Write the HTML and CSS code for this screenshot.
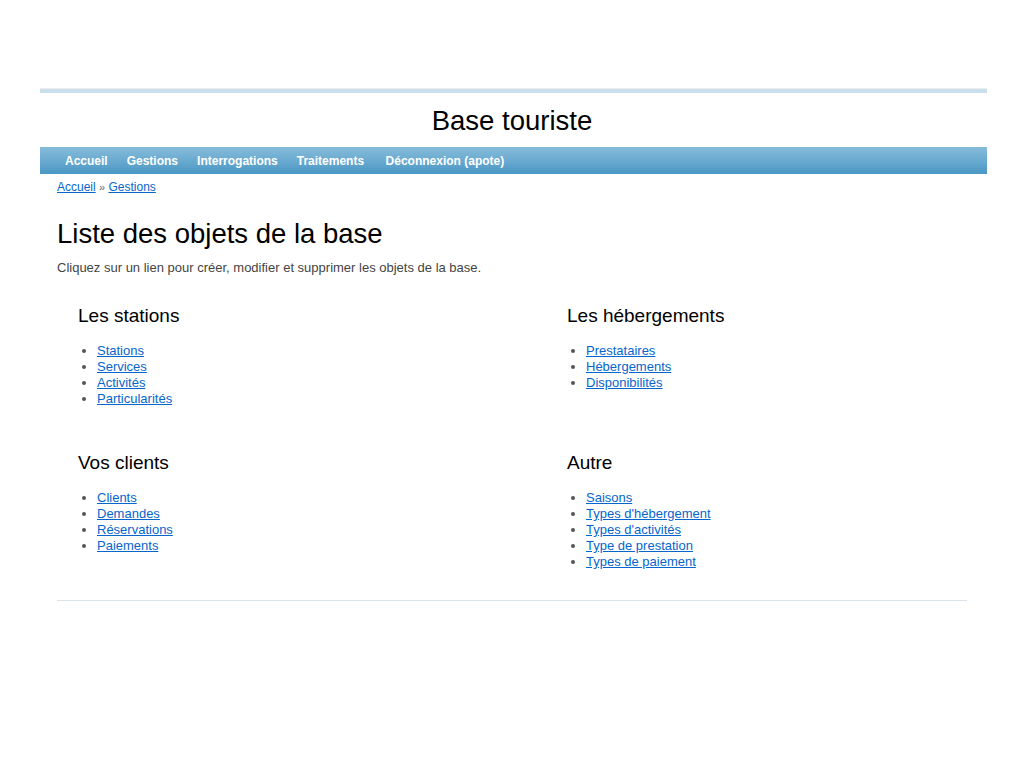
FILE: index.html
```html
<!DOCTYPE html>
<html lang="fr">
<head>
<meta charset="utf-8">
<title>Base touriste</title>
<link rel="stylesheet" href="styles.css">
</head>
<body>
<div class="page">
  <div class="topline"></div>
  <header class="site-header">Base touriste</header>
  <nav class="menu">
    <ul>
      <li><a href="#">Accueil</a></li>
      <li><a href="#">Gestions</a></li>
      <li><a href="#">Interrogations</a></li>
      <li><a href="#">Traitements</a></li>
      <li><a href="#">Déconnexion (apote)</a></li>
    </ul>
  </nav>
  <div class="content">
    <div class="breadcrumbs"><a href="#">Accueil</a> <span class="sep">»</span> <a href="#">Gestions</a></div>
    <h1>Liste des objets de la base</h1>
    <p class="intro">Cliquez sur un lien pour créer, modifier et supprimer les objets de la base.</p>
    <div class="sections">
      <section class="block">
        <h2>Les stations</h2>
        <ul>
          <li><a href="#">Stations</a></li>
          <li><a href="#">Services</a></li>
          <li><a href="#">Activités</a></li>
          <li><a href="#">Particularités</a></li>
        </ul>
      </section>
      <section class="block">
        <h2>Les hébergements</h2>
        <ul>
          <li><a href="#">Prestataires</a></li>
          <li><a href="#">Hébergements</a></li>
          <li><a href="#">Disponibilités</a></li>
        </ul>
      </section>
      <section class="block">
        <h2>Vos clients</h2>
        <ul>
          <li><a href="#">Clients</a></li>
          <li><a href="#">Demandes</a></li>
          <li><a href="#">Réservations</a></li>
          <li><a href="#">Paiements</a></li>
        </ul>
      </section>
      <section class="block">
        <h2>Autre</h2>
        <ul>
          <li><a href="#">Saisons</a></li>
          <li><a href="#">Types d'hébergement</a></li>
          <li><a href="#">Types d'activités</a></li>
          <li><a href="#">Type de prestation</a></li>
          <li><a href="#">Types de paiement</a></li>
        </ul>
      </section>
    </div>
    <div class="footer-line"></div>
  </div>
</div>
</body>
</html>
```

FILE: styles.css
```css
html, body {
  margin: 0;
  padding: 0;
  background: #fff;
}
body {
  font-family: "Liberation Sans", Arial, sans-serif;
  font-size: 12px;
  color: #555;
}
.page {
  width: 947px;
  margin: 88px 0 0 40px;
}
.topline {
  height: 4px;
  background: #c9e0ec;
  border-top: 1px solid #ececec;
}
.site-header {
  height: 52px;
  padding: 2px 3px 0 0;
  line-height: 52px;
  text-align: center;
  font-size: 27.5px;
  color: #000;
}
.menu {
  height: 27px;
  background: linear-gradient(to bottom, #86bcda 0%, #6aaad0 50%, #4a96c4 100%);
}
.menu ul {
  list-style: none;
  margin: 0;
  padding: 1px 0 0 15.5px;
  display: flex;
}
.menu a {
  display: block;
  padding: 0 9.5px;
  line-height: 26px;
  font-size: 12px;
  font-weight: bold;
  color: #fff;
  text-decoration: none;
}
.menu li:last-child a {
  padding-left: 12px;
}
.content {
  padding: 0 20px 0 17px;
}
.breadcrumbs {
  margin-top: 5px;
  line-height: 16px;
  font-size: 12px;
}
.breadcrumbs .sep {
  color: #666;
  font-size: 11px;
}
a {
  color: #0666cc;
}
h1 {
  margin: 23px 0 0;
  font-size: 27.5px;
  line-height: 32px;
  font-weight: normal;
  color: #000;
}
.intro {
  margin: 10px 0 0;
  line-height: 16px;
  font-size: 13px;
  color: #444;
}
.sections {
  margin-top: 29px;
  display: grid;
  grid-template-columns: 489px 1fr;
  row-gap: 45px;
}
.block {
  padding-left: 21px;
}
.block h2 {
  margin: 0;
  font-size: 19px;
  line-height: 22px;
  font-weight: normal;
  color: #000;
}
.block ul {
  margin: 16px 0 0;
  padding-left: 19px;
}
.block li {
  font-size: 13px;
  line-height: 16px;
}
.block li::marker {
  color: #555;
}
.footer-line {
  margin-top: 30px;
  border-top: 1px solid #d8e3ea;
}
```
